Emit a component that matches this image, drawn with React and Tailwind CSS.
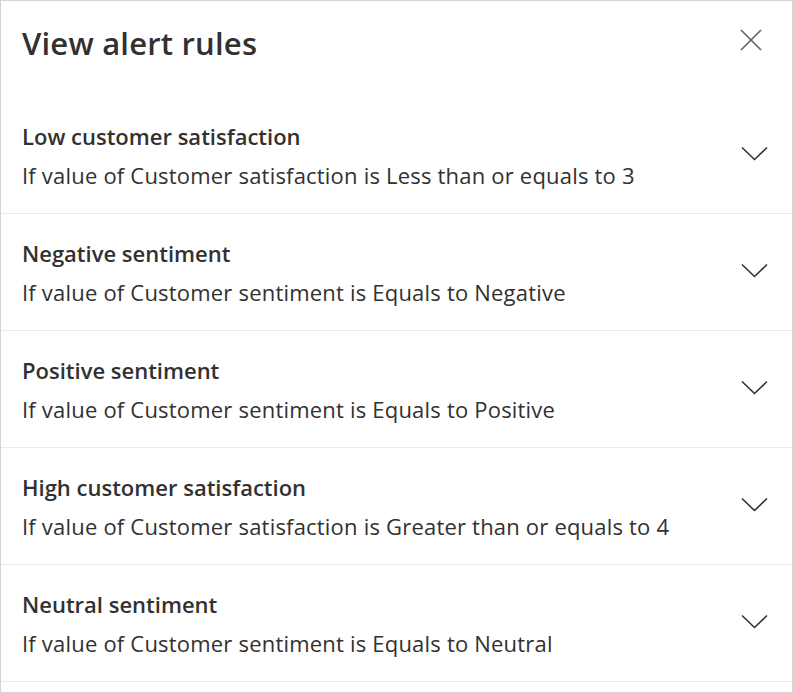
import React from "react";

const rules = [
  ["Low customer satisfaction", "If value of Customer satisfaction is Less than or equals to 3"],
  ["Negative sentiment", "If value of Customer sentiment is Equals to Negative"],
  ["Positive sentiment", "If value of Customer sentiment is Equals to Positive"],
  ["High customer satisfaction", "If value of Customer satisfaction is Greater than or equals to 4"],
  ["Neutral sentiment", "If value of Customer sentiment is Equals to Neutral"],
];

function Chevron() {
  return (
    <svg width="27" height="15" viewBox="0 0 27 15" fill="none" className="mb-[3px]">
      <polyline points="1,1.5 13.5,13.5 26,1.5" stroke="#323130" strokeWidth="1.6" />
    </svg>
  );
}

function Close() {
  return (
    <svg width="22" height="22" viewBox="0 0 22 22" fill="none">
      <line x1="1" y1="1" x2="21" y2="21" stroke="#605e5c" strokeWidth="1.6" />
      <line x1="21" y1="1" x2="1" y2="21" stroke="#605e5c" strokeWidth="1.6" />
    </svg>
  );
}

export default function App() {
  return (
    <div
      className="w-[793px] h-[693px] border border-[#d4d4d4] bg-white text-[#323130] overflow-hidden"
      style={{ fontFamily: '"Open Sans", "Noto Sans", sans-serif' }}
    >
      <div className="h-[96px] flex justify-between pl-[21px] pr-[30px]">
        <h1 className="text-[31px] font-semibold leading-[40px] pt-[22px] tracking-[0.2px]">View alert rules</h1>
        <div className="pt-[28px]">
          <Close />
        </div>
      </div>
      {rules.map(([title, desc]) => (
        <div
          key={title}
          className="h-[117px] border-b border-[#edebe9] flex items-center justify-between pl-[21px] pr-[24px]"
        >
          <div className="flex flex-col pt-[2px]">
            <div className="text-[22px] font-semibold leading-[39px]">{title}</div>
            <div className="text-[22px] leading-[39px] tracking-[0.2px]">{desc}</div>
          </div>
          <Chevron />
        </div>
      ))}
    </div>
  );
}
